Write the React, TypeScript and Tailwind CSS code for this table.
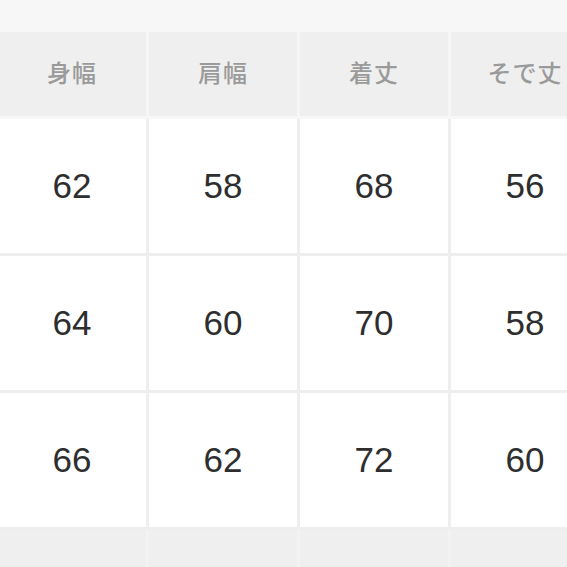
const HEADERS = ["身幅", "肩幅", "着丈", "そで丈"];

const ROWS = [
  ["62", "58", "68", "56"],
  ["64", "60", "70", "58"],
  ["66", "62", "72", "60"],
];

const cols = "grid grid-cols-[148px_148px_148px_148px] gap-x-[3px]";

export default function App() {
  return (
    <div
      className="w-[567px] h-[567px] overflow-hidden bg-[#f7f7f7]"
      style={{ fontFamily: '"Liberation Sans", "Noto Sans CJK JP", sans-serif' }}
    >
      {/* 上の余白 */}
      <div className="h-[32px]" />

      {/* ヘッダー */}
      <div className={`${cols} -ml-[2px] w-max bg-[#f6f6f6]`}>
        {HEADERS.map((h) => (
          <div
            key={h}
            className="h-[84px] bg-[#efefef] flex items-center justify-center text-[24px] font-medium text-[#9a9a9a] tracking-[1px]"
          >
            {h}
          </div>
        ))}
      </div>

      <div className="h-[3px] bg-[#f7f7f7]" />

      {/* 本体 */}
      <div className="flex flex-col gap-y-[3px] bg-[#eeeeee] w-max -ml-[2px]">
        {ROWS.map((row, i) => (
          <div key={i} className={cols}>
            {row.map((v, j) => (
              <div
                key={j}
                className="h-[134px] bg-white flex items-center justify-center text-[35px] text-[#2e2e2e]"
              >
                {v}
              </div>
            ))}
          </div>
        ))}
        <div className={`${cols} bg-[#f2f2f2]`}>
          {HEADERS.map((h) => (
            <div key={h} className="h-[40px] bg-[#efefef]" />
          ))}
        </div>
      </div>
    </div>
  );
}
